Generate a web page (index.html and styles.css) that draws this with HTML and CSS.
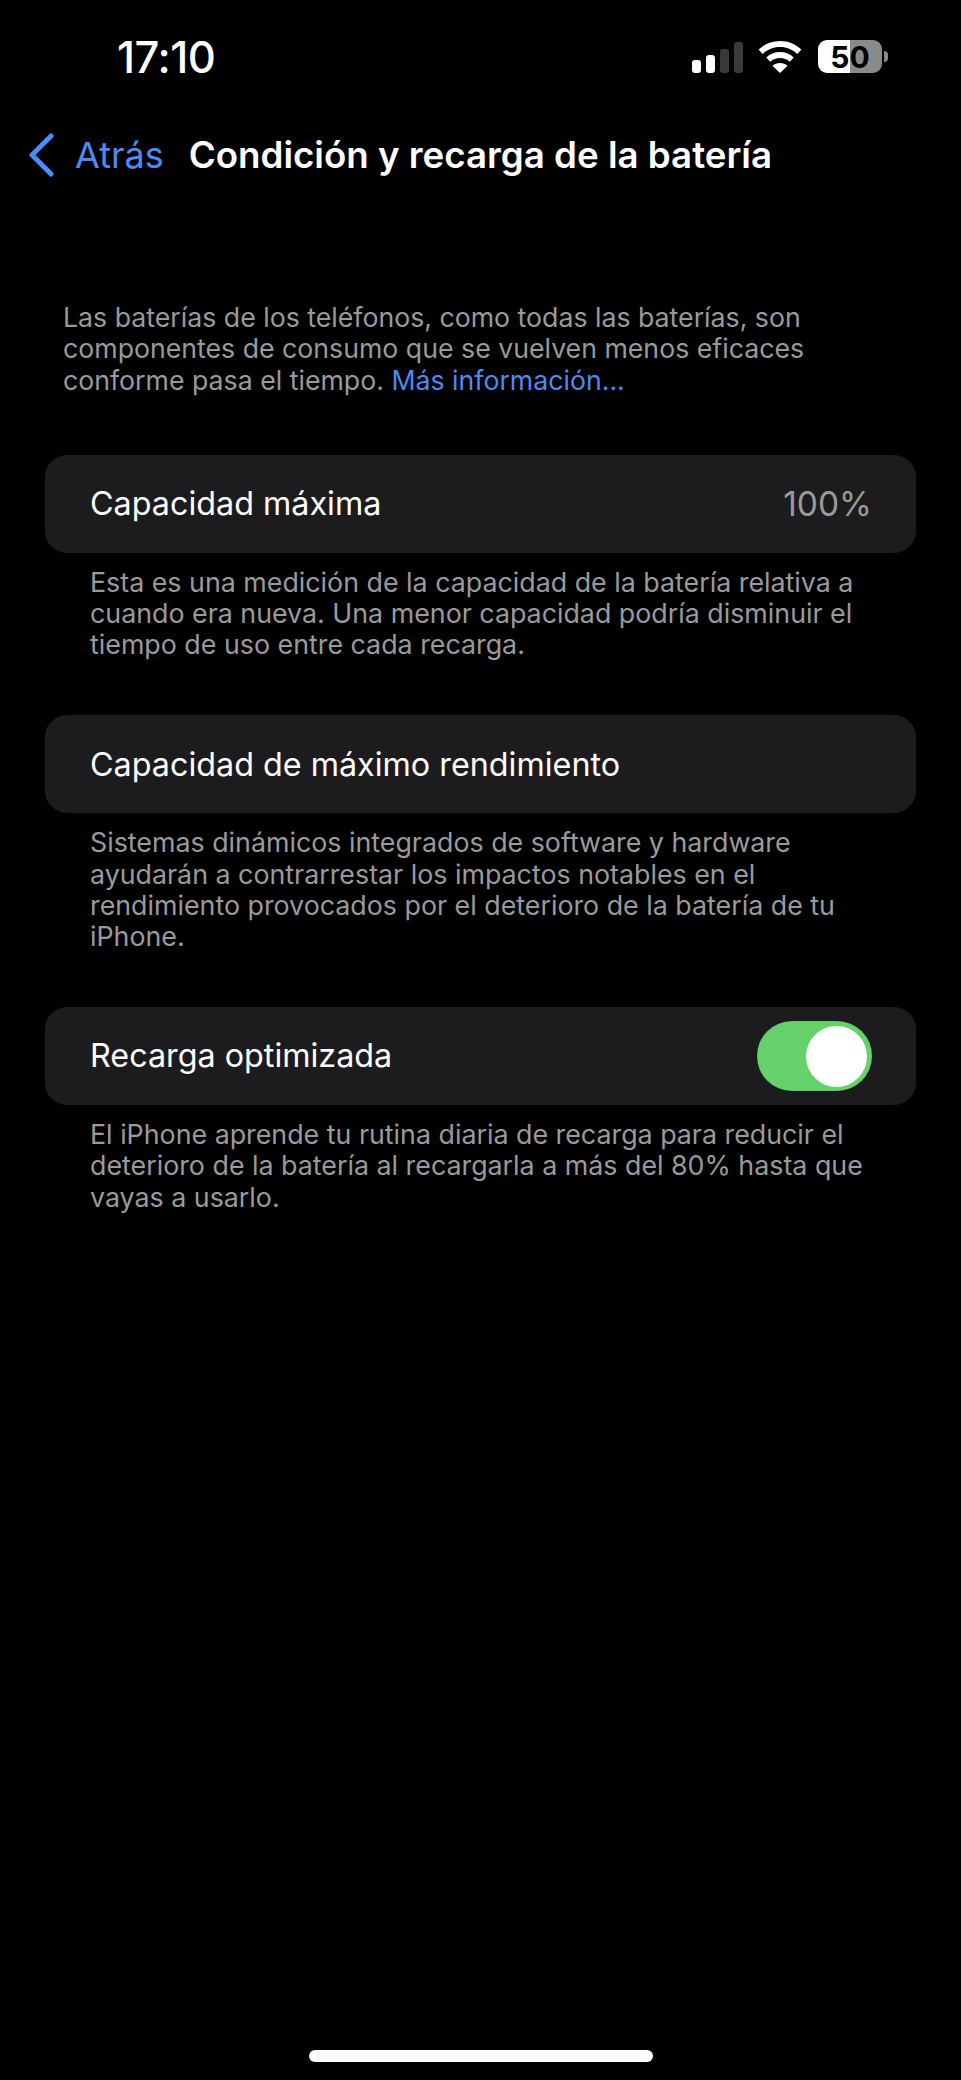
FILE: index.html
```html
<!DOCTYPE html>
<html lang="es">

<head>
    <meta charset="UTF-8">
    <meta name="viewport" content="width=device-width, initial-scale=1.0">
    <title>Condición y recarga de la batería</title>
    <link rel="stylesheet" href="styles.css">
</head>

<body>

    <div class="screen">
        <header class="status-bar">
            <span class="time">17:10</span>
            <div class="status-icons">
                <div class="signal">
                    <span class="bar bar-1"></span>
                    <span class="bar bar-2"></span>
                    <span class="bar bar-3"></span>
                    <span class="bar bar-4"></span>
                </div>
                <svg class="wifi" width="44" height="32" viewBox="0 0 44 32">
                    <path d="M22 0C13.6 0 6.2 3.2 .6 8.6l4 4.4C9.100 8.700 15.200 6 22 6s12.900 2.700 17.400 7l4-4.400C37.800 3.200 30.400 0 22 0z" fill="#fff"/>
                    <path d="M22 11c-5.400 0-10.100 2-13.700 5.400l4 4.300C14.900 18.300 18.300 17 22 17s7.100 1.300 9.700 3.700l4-4.300C32.100 13 27.400 11 22 11z" fill="#fff"/>
                    <path d="M22 22c-2.900 0-5.500 1-7.500 2.800L22 32l7.500-7.200C27.500 23 24.900 22 22 22z" fill="#fff"/>
                </svg>
                <div class="battery">
                    <div class="battery-body"><span class="battery-level">50</span></div>
                    <span class="battery-nub"></span>
                </div>
            </div>
        </header>

        <nav class="nav-bar">
            <a class="back-link">
                <svg class="chevron" width="26" height="44" viewBox="0 0 26 44">
                    <path d="M23 3L4 22l19 19" fill="none" stroke="#4c8bf5" stroke-width="5" stroke-linecap="round" stroke-linejoin="round"/>
                </svg>
                <span>Atrás</span>
            </a>
            <h1 class="nav-title">Condición y recarga de la batería</h1>
        </nav>

        <main class="content">
            <p class="intro">Las baterías de los teléfonos, como todas las baterías, son componentes de consumo que se vuelven menos eficaces conforme pasa el tiempo. <a class="info-link">Más información...</a></p>

            <section class="group">
                <div class="row">
                    <span class="row-label">Capacidad máxima</span>
                    <span class="row-value">100%</span>
                </div>
                <p class="note">Esta es una medición de la capacidad de la batería relativa a cuando era nueva. Una menor capacidad podría disminuir el tiempo de uso entre cada recarga.</p>
            </section>

            <section class="group">
                <div class="row">
                    <span class="row-label">Capacidad de máximo rendimiento</span>
                </div>
                <p class="note">Sistemas dinámicos integrados de software y hardware ayudarán a contrarrestar los impactos notables en el rendimiento provocados por el deterioro de la batería de tu iPhone.</p>
            </section>

            <section class="group">
                <div class="row">
                    <span class="row-label">Recarga optimizada</span>
                    <div class="toggle"><span class="knob"></span></div>
                </div>
                <p class="note">El iPhone aprende tu rutina diaria de recarga para reducir el deterioro de la batería al recargarla a más del 80% hasta que vayas a usarlo.</p>
            </section>
        </main>

        <div class="home-bar"></div>
    </div>

</body>

</html>
```
FILE: styles.css
```css
* {
    box-sizing: border-box;
}

body {
    margin: 0;
    background-color: #000;
    color: #fff;
    font-family: Inter, "Noto Sans", sans-serif;
}

.screen {
    height: 2080px;
    display: flex;
    flex-direction: column;
    overflow: hidden;
}

/* status bar */
.status-bar {
    height: 100px;
    padding: 36px 73px 0 117px;
    display: flex;
    justify-content: space-between;
    align-items: flex-start;
}

.time {
    font-size: 43.500px;
    line-height: 42px;
    font-weight: 500;
    letter-spacing: -0.5px;
}

.status-icons {
    display: flex;
    align-items: flex-end;
    padding-top: 4px;
}

.signal {
    display: flex;
    align-items: flex-end;
    gap: 5px;
    margin-right: 15px;
}

.bar {
    width: 9px;
    border-radius: 3px;
    background-color: #fff;
}

.bar-1 { height: 13px; }
.bar-2 { height: 18px; }
.bar-3 { height: 24px; background-color: #3a3a3a; }
.bar-4 { height: 31px; background-color: #3a3a3a; }

.wifi {
    margin-right: 16px;
}

.battery {
    display: flex;
    align-items: center;
    gap: 2px;
}

.battery-body {
    width: 64px;
    height: 33px;
    border-radius: 9px;
    background: linear-gradient(to right, #fff 50%, #8a8a8a 50%);
    display: flex;
    align-items: center;
    justify-content: center;
}

.battery-level {
    color: #000;
    font-size: 30px;
    font-weight: 700;
}

.battery-nub {
    width: 4px;
    height: 11px;
    border-radius: 0 4px 4px 0;
    background-color: #8a8a8a;
}

/* nav */
.nav-bar {
    height: 109px;
    padding-left: 28px;
    display: flex;
    align-items: center;
}

.back-link {
    display: flex;
    align-items: center;
    gap: 21px;
    color: #4c8bf5;
    font-size: 36px;
}

.nav-title {
    margin: 0 0 0 25px;
    font-size: 36.700px;
    font-weight: 600;
    white-space: nowrap;
}

/* settings */
.content {
    flex: 1;
    padding: 93px 45px 0;
}

.intro {
    margin: 0 0 59px;
    padding: 0 18px;
    color: #9a9a9c;
    font-size: 26.700px;
    line-height: 31.300px;
}

.info-link {
    color: #4c8bf5;
}

.group {
    margin-bottom: 54.500px;
}

.row {
    height: 98px;
    padding: 0 44px 0 45px;
    border-radius: 22px;
    background-color: #1c1c1e;
    display: flex;
    align-items: center;
    justify-content: space-between;
}

.row-label {
    font-size: 32.300px;
}

.row-value {
    color: #9a9a9c;
    font-size: 33.500px;
}

.toggle {
    width: 115px;
    height: 70px;
    padding: 5px;
    border-radius: 35px;
    background-color: #65d16a;
    display: flex;
    justify-content: flex-end;
}

.knob {
    width: 61px;
    height: 61px;
    border-radius: 50%;
    background-color: #fff;
}

.note {
    margin: 14px 0 0;
    padding: 0 45px;
    color: #9a9a9c;
    font-size: 26.800px;
    line-height: 31.300px;
}

.home-bar {
    width: 344px;
    height: 12px;
    margin: 0 auto 18px;
    border-radius: 6px;
    background-color: #fff;
}
```
